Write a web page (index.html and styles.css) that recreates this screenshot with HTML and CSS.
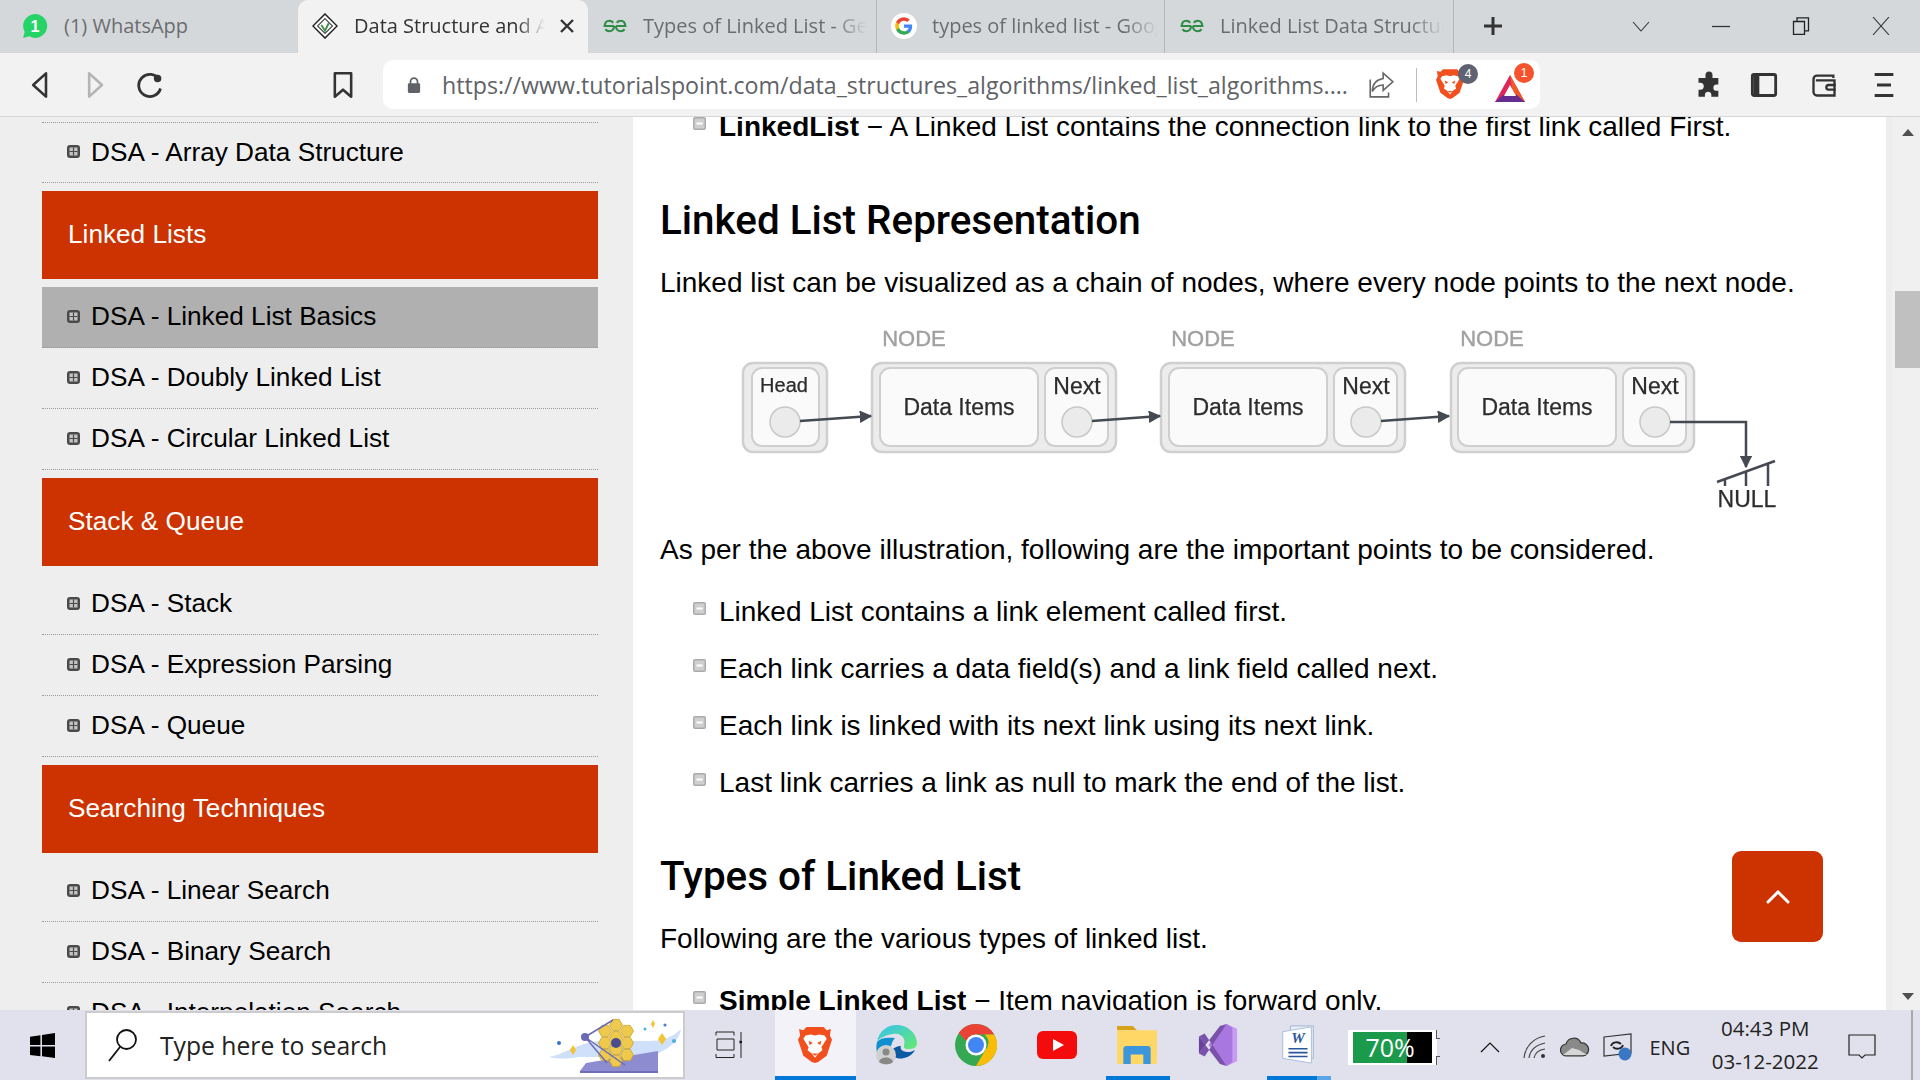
FILE: index.html
```html
<!DOCTYPE html>
<html lang="en">
<head>
<meta charset="utf-8">
<title>Data Structure and Algorithms - Linked List</title>
<link rel="stylesheet" href="styles.css">
</head>
<body>
<svg class="defs" width="0" height="0" aria-hidden="true">
  <defs>
    <symbol id="gfg" viewBox="0 0 32 18">
      <path d="M15 9H3.2C3.6 5 6 2.6 9 2.6c2 0 3.600.8 4.800 2.400M15 9c-.4 4-2.800 6.400-6 6.400-2 0-3.600-.8-4.800-2.400M17 9h11.800C28.400 5 26 2.600 23 2.600c-2 0-3.600.8-4.800 2.400M17 9c.4 4 2.800 6.400 6 6.400 2 0 3.600-.8 4.800-2.400" fill="none" stroke="#2f8d46" stroke-width="2.600"/>
    </symbol>
    <symbol id="brave" viewBox="0 0 32 36">
      <path d="M8 1h16l3 3 4-1-1 6 2 4-5 15-8 6-3 1-3-1-8-6L0 13l2-4-1-6 4 1z" fill="#f1501e"/>
      <path d="M7 9l5-1 4 1 4-1 5 1 2 3-5 8 1 3-4 3-3 4-3-4-4-3 1-3-5-8z" fill="#fff"/>
      <path d="M10 14l4 2-3 2zM22 14l-4 2 3 2zM13 26h6l-3 2z" fill="#f1501e"/>
    </symbol>
    <symbol id="sq" viewBox="0 0 13 13">
      <rect x="0" y="0" width="13" height="13" rx="3" fill="#4a4a4a"/>
      <rect x="2.500" y="2.500" width="8" height="8" fill="#c4c4c4"/>
      <path d="M6.500 2.500v8M2.500 6.500h8" stroke="#4a4a4a" stroke-width="1.200"/>
    </symbol>
    <symbol id="minus" viewBox="0 0 13 13">
      <rect x="0" y="0" width="13" height="13" rx="2" fill="#aaa"/>
      <rect x="1.500" y="1.500" width="10" height="10" fill="#cfcfcf"/>
      <path d="M3.500 6.500h6" stroke="#fff" stroke-width="2"/>
    </symbol>
    <polygon id="hex" points="6.500,0 3.250,5.600 -3.250,5.600 -6.500,0 -3.250,-5.600 3.250,-5.600"/>
  </defs>
</svg>

<header class="tabstrip">
  <div class="tab tab-wa">
    <svg class="fav" viewBox="0 0 24 24"><path d="M12 1a11 11 0 0 0-9.500 16.500L1 23l5.700-1.500A11 11 0 1 0 12 1z" fill="#25d366"/><text x="12" y="17.500" class="fav-num">1</text></svg>
    <span class="tab-name">(1) WhatsApp</span>
  </div>
  <div class="tab tab-active">
    <svg class="fav" viewBox="0 0 28 28"><path d="M14 1L27 14 14 27 1 14z" fill="#fff" stroke="#222" stroke-width="1.600"/><path d="M14 6L22 14 14 22 6 14z" fill="none" stroke="#444" stroke-width="1.200"/><path d="M10 13l4 6 4-8" fill="none" stroke="#3b8f4a" stroke-width="2"/></svg>
    <span class="tab-title t-active">Data Structure and Algorithms</span>
    <svg class="tab-x" viewBox="0 0 16 16"><path d="M2 2l12 12M14 2L2 14" stroke="#333" stroke-width="2.400"/></svg>
  </div>
  <div class="tab tab-gfg">
    <svg class="fav-g"><use href="#gfg"/></svg>
    <span class="tab-title t-gfg">Types of Linked List - GeeksforGeeks</span>
  </div>
  <div class="tab tab-goog tab-sep">
    <svg class="fav" viewBox="0 0 24 24"><circle cx="12" cy="12" r="12" fill="#fff"/><path d="M19.500 12.300c0-.6 0-1.100-.1-1.600H12v3h4.300a3.700 3.700 0 0 1-1.600 2.400v2h2.600c1.500-1.400 2.200-3.400 2.200-5.800z" fill="#4285f4"/><path d="M12 20c2.200 0 4-.7 5.300-1.900l-2.600-2c-.7.5-1.600.8-2.700.8-2.100 0-3.900-1.400-4.500-3.300H4.800v2.100A8 8 0 0 0 12 20z" fill="#34a853"/><path d="M7.500 13.600a4.800 4.800 0 0 1 0-3.200V8.300H4.800a8 8 0 0 0 0 7.400z" fill="#fbbc05"/><path d="M12 7.200c1.200 0 2.200.4 3 1.200l2.300-2.300A8 8 0 0 0 4.800 8.300l2.700 2.100c.6-1.900 2.400-3.200 4.500-3.200z" fill="#ea4335"/></svg>
    <span class="tab-title t-goog">types of linked list - Google Search</span>
  </div>
  <div class="tab tab-gfg tab-sep tab-last">
    <svg class="fav-g"><use href="#gfg"/></svg>
    <span class="tab-title t-last">Linked List Data Structure - GeeksforGeeks</span>
  </div>
  <svg class="plus" viewBox="0 0 20 20"><path d="M10 1v18M1 10h18" stroke="#333" stroke-width="3"/></svg>
  <div class="win-ctrls">
    <svg class="wc" viewBox="0 0 18 18"><path d="M1 5l8 9 8-9" fill="none" stroke="#333" stroke-width="1.100"/></svg>
    <svg class="wc" viewBox="0 0 18 18"><path d="M0 9.500h18" stroke="#333" stroke-width="1.300"/></svg>
    <svg class="wc" viewBox="0 0 18 18"><path d="M1.500 4.500h11v13h-11zM5 4.500V.8h11.500v13h-4" fill="none" stroke="#222" stroke-width="1.300"/></svg>
    <svg class="wc" viewBox="0 0 18 18"><path d="M1 0l16 18M17 0L1 18" stroke="#333" stroke-width="1.100"/></svg>
  </div>
</header>

<nav class="toolbar">
  <svg class="ti" viewBox="0 0 24 24"><path d="M18 2L7 12l11 10z" fill="none" stroke="#333" stroke-width="2.200" stroke-linejoin="round"/></svg>
  <svg class="ti ti-fwd" viewBox="0 0 24 24"><path d="M7 2l11 10L7 22z" fill="none" stroke="#b4b4b4" stroke-width="2.200" stroke-linejoin="round"/></svg>
  <svg class="ti ti-rel" viewBox="0 0 24 24"><path d="M20 7.500A9.500 9.500 0 1 0 21 15" fill="none" stroke="#333" stroke-width="2.400"/><circle cx="18.500" cy="6.500" r="3.200" fill="#333"/></svg>
  <svg class="ti ti-book" viewBox="0 0 24 24"><path d="M5 2h14v20l-7-6-7 6z" fill="none" stroke="#333" stroke-width="2.200" stroke-linejoin="round"/></svg>
  <div class="urlbar">
    <svg class="lock" viewBox="0 0 16 20"><path d="M4 9V6a4 4 0 0 1 8 0v3" fill="none" stroke="#5f6368" stroke-width="2"/><rect x="1" y="8" width="14" height="11" rx="1.500" fill="#5f6368"/></svg>
    <span class="url">https://www.tutorialspoint.com/data_structures_algorithms/linked_list_algorithms....</span>
    <svg class="share" viewBox="0 0 26 26"><path d="M15 2l9 8-9 8v-5c-5 0-8 2-10 6 0-7 4-11 10-12zM3 8v16h17v-4" fill="none" stroke="#666" stroke-width="1.500"/></svg>
    <span class="url-div"></span>
    <span class="ext-brave">
      <svg class="ext-brave-ic"><use href="#brave"/></svg>
      <span class="badge badge-gray">4</span>
    </span>
    <span class="ext-bat">
      <svg class="ext-bat-ic" viewBox="0 0 32 30"><path d="M16 2l15 27H1z" fill="#e0255a"/><path d="M16 2l15 27H20z" fill="#f15a24"/><path d="M1 29h30l-8-7H9z" fill="#662d91"/><path d="M16 12l6 11H10z" fill="#fff"/></svg>
      <span class="badge badge-red">1</span>
    </span>
  </div>
  <svg class="ti ti-puzzle" viewBox="0 0 24 24"><path d="M9 3.500a3 3 0 0 1 6 0V6h5v5.500h-2a2.800 2.800 0 0 0 0 5.500h2v5h-6v-2a2.800 2.800 0 0 0-5.500 0v2H3v-6h1.500a3 3 0 0 0 0-6H3V6h6z" fill="#333"/></svg>
  <svg class="ti ti-side" viewBox="0 0 24 24"><rect x="2" y="3" width="20" height="18" rx="1.500" fill="none" stroke="#333" stroke-width="2.400"/><path d="M3 3h5v18H3z" fill="#333"/></svg>
  <svg class="ti ti-wal" viewBox="0 0 24 24"><path d="M20 6V4H6a3 3 0 0 0-3 3v11a3 3 0 0 0 3 3h15V8H5" fill="none" stroke="#333" stroke-width="2"/><path d="M22 12h-6a2 2 0 0 0 0 4h6" fill="none" stroke="#333" stroke-width="2"/></svg>
  <svg class="ti ti-menu" viewBox="0 0 24 24"><path d="M4 3h16M6 12h12M4 21h16" stroke="#333" stroke-width="2.400"/></svg>
</nav>

<div class="viewport">
  <aside class="sidebar">
    <ul class="side-list">
      <li class="side-item"><svg class="sq"><use href="#sq"/></svg>DSA - Array Data Structure</li>
      <li class="side-head">Linked Lists</li>
      <li class="side-item side-active"><svg class="sq"><use href="#sq"/></svg>DSA - Linked List Basics</li>
      <li class="side-item"><svg class="sq"><use href="#sq"/></svg>DSA - Doubly Linked List</li>
      <li class="side-item"><svg class="sq"><use href="#sq"/></svg>DSA - Circular Linked List</li>
      <li class="side-head">Stack &amp; Queue</li>
      <li class="side-item"><svg class="sq"><use href="#sq"/></svg>DSA - Stack</li>
      <li class="side-item"><svg class="sq"><use href="#sq"/></svg>DSA - Expression Parsing</li>
      <li class="side-item"><svg class="sq"><use href="#sq"/></svg>DSA - Queue</li>
      <li class="side-head">Searching Techniques</li>
      <li class="side-item"><svg class="sq"><use href="#sq"/></svg>DSA - Linear Search</li>
      <li class="side-item"><svg class="sq"><use href="#sq"/></svg>DSA - Binary Search</li>
      <li class="side-item"><svg class="sq"><use href="#sq"/></svg>DSA - Interpolation Search</li>
    </ul>
  </aside>
  <main class="main">
    <div class="article">
      <ul class="points points-top">
        <li><svg class="minus"><use href="#minus"/></svg><span><b>LinkedList</b> − A Linked List contains the connection link to the first link called First.</span></li>
      </ul>
      <h2 class="h-first">Linked List Representation</h2>
      <p class="p-first">Linked list can be visualized as a chain of nodes, where every node points to the next node.</p>
      <svg class="diagram" viewBox="730 320 1060 200">
        <defs>
          <marker id="ah" markerWidth="5" markerHeight="5" refX="4.500" refY="2.500" orient="auto"><path d="M0 0l5 2.500L0 5z" fill="#454a52"/></marker>
        </defs>
        <g class="d-outer">
          <rect x="743" y="362" width="84" height="89" rx="10"/>
          <rect x="872" y="362" width="244" height="89" rx="10"/>
          <rect x="1161" y="362" width="244" height="89" rx="10"/>
          <rect x="1451" y="362" width="243" height="89" rx="10"/>
        </g>
        <g class="d-inner">
          <rect x="752" y="367" width="67" height="78" rx="10"/>
          <rect x="880" y="367" width="158" height="78" rx="10"/>
          <rect x="1045" y="367" width="63" height="78" rx="10"/>
          <rect x="1169" y="367" width="158" height="78" rx="10"/>
          <rect x="1334" y="367" width="63" height="78" rx="10"/>
          <rect x="1458" y="367" width="158" height="78" rx="10"/>
          <rect x="1623" y="367" width="63" height="78" rx="10"/>
        </g>
        <g class="d-circle">
          <circle cx="785" cy="421" r="15"/>
          <circle cx="1077" cy="421" r="15"/>
          <circle cx="1366" cy="421" r="15"/>
          <circle cx="1655" cy="421" r="15"/>
        </g>
        <g class="d-arrow">
          <path d="M800 420l71-5" marker-end="url(#ah)"/>
          <path d="M1092 420l68-5" marker-end="url(#ah)"/>
          <path d="M1381 420l68-5" marker-end="url(#ah)"/>
          <path d="M1670 421h76v45" marker-end="url(#ah)"/>
          <path d="M1717 481l58-21M1725 478v7M1746 470v15M1768 462v23"/>
        </g>
        <g class="d-node">
          <text x="914" y="345">NODE</text>
          <text x="1203" y="345">NODE</text>
          <text x="1492" y="345">NODE</text>
        </g>
        <g class="d-label">
          <text x="784" y="391" class="d-head">Head</text>
          <text x="959" y="414">Data Items</text>
          <text x="1248" y="414">Data Items</text>
          <text x="1537" y="414">Data Items</text>
          <text x="1077" y="393">Next</text>
          <text x="1366" y="393">Next</text>
          <text x="1655" y="393">Next</text>
          <text x="1747" y="506">NULL</text>
        </g>
      </svg>
      <p class="p-after">As per the above illustration, following are the important points to be considered.</p>
      <ul class="points points-mid">
        <li><svg class="minus"><use href="#minus"/></svg><span>Linked List contains a link element called first.</span></li>
        <li><svg class="minus"><use href="#minus"/></svg><span>Each link carries a data field(s) and a link field called next.</span></li>
        <li><svg class="minus"><use href="#minus"/></svg><span>Each link is linked with its next link using its next link.</span></li>
        <li><svg class="minus"><use href="#minus"/></svg><span>Last link carries a link as null to mark the end of the list.</span></li>
      </ul>
      <h2 class="h-second">Types of Linked List</h2>
      <p class="p-second">Following are the various types of linked list.</p>
      <ul class="points points-end">
        <li><svg class="minus"><use href="#minus"/></svg><span><b>Simple Linked List</b> − Item navigation is forward only.</span></li>
      </ul>
    </div>
    <button class="to-top" aria-label="Back to top"><svg class="to-top-ic" viewBox="0 0 24 14"><path d="M2 12L12 2l10 10" fill="none" stroke="#fff" stroke-width="3" stroke-linecap="round"/></svg></button>
  </main>
  <div class="scrollbar">
    <span class="arr-up"></span>
    <span class="thumb"></span>
    <span class="arr-down"></span>
  </div>
</div>

<footer class="taskbar">
  <div class="tb-start">
    <svg class="win" viewBox="0 0 24 24"><path d="M0 3.500l10-1.400V11.500H0zM11.500 1.900L24 0v11.500H11.500zM0 13h10v9.400L0 21zM11.500 13H24v11l-12.500-1.800z" fill="#000"/></svg>
  </div>
  <div class="tb-search">
    <svg class="mag" viewBox="0 0 30 34"><circle cx="18.500" cy="11.500" r="9.500" fill="none" stroke="#111" stroke-width="1.800"/><path d="M12 19L1 33" stroke="#111" stroke-width="1.800"/></svg>
    <span class="search-text">Type here to search</span>
    <svg class="jwst" viewBox="0 0 132 56">
      <path d="M0 40C14 38 28 26 50 24h50c14 0 24-4 32-12-2 14-18 26-40 28H30C18 42 8 42 0 40z" fill="#cfe0fa"/>
      <path d="M31 54l6-8 72-12v20z" fill="#8e8cd0"/>
      <path d="M31 54h78v2H31z" fill="#6f6db8"/>
      <g class="j-hex">
        <use href="#hex" x="56" y="14"/><use href="#hex" x="56" y="26"/><use href="#hex" x="56" y="38"/>
        <use href="#hex" x="67" y="8"/><use href="#hex" x="67" y="20"/><use href="#hex" x="67" y="32"/><use href="#hex" x="67" y="44"/>
        <use href="#hex" x="78" y="14"/><use href="#hex" x="78" y="26"/><use href="#hex" x="78" y="38"/>
      </g>
      <circle cx="67" cy="26" r="5" fill="#4b4b8f"/>
      <path d="M36 20L64 3M36 20l40 28M36 20l22 26" stroke="#6a6ab5" stroke-width="1.500" fill="none"/>
      <circle cx="36" cy="20" r="4" fill="#6a6ab5"/>
      <path d="M113 16l4 6-4 6-4-6zM104 3l2 4-2 4-2-4zM24 28l3 5-3 5-3-5z" fill="#f4c430"/>
      <circle cx="116" cy="8" r="1.600" fill="#4b7fd6"/><circle cx="125" cy="24" r="2" fill="#4ab0e0"/><circle cx="10" cy="26" r="2" fill="#3a6fd0"/><circle cx="96" cy="12" r="1.500" fill="#4ab0e0"/>
    </svg>
  </div>
  <div class="tb-cell tb-taskview">
    <svg class="tb-tv" viewBox="0 0 28 28"><path d="M2 1h18M2 4.500V1M20 4.500V1M3 8h17v11H3zM2 26.500h18M2 23v3.500M20 23v3.500M27 1v8M27 13v14" fill="none" stroke="#222" stroke-width="1"/><rect x="25.500" y="9.500" width="3" height="3" fill="#111"/></svg>
  </div>
  <div class="tb-cell tb-on"><svg class="tb-ic-brave"><use href="#brave"/></svg></div>
  <div class="tb-cell">
    <svg class="tb-ic" viewBox="0 0 42 42"><defs><linearGradient id="e1" x1="0" y1="0" x2="1" y2="1"><stop offset="0" stop-color="#35c1f1"/><stop offset="1" stop-color="#66eb6e"/></linearGradient></defs><path d="M2 18C4 7 12 1 22 1c11 0 20 9 20 18 0 3-2 6-7 6-3 0-6 0-6-2 0-3 1-4 0-8-2-4-6-6-11-5C11 11 4 14 2 18z" fill="url(#e1)"/><path d="M2 18c-2 9 1 17 6 20 1-4 3-8 7-11 1-6 2-10 5-13-9-1-15 0-18 4z" fill="#0f8fcf"/><path d="M15 27c2 6 8 9 14 7 5-1 9-4 11-8-3 2-8 3-12 1-2-1-3-3-2-5-4 0-8 2-11 5z" fill="#0c59a4"/><circle cx="11" cy="31" r="10" fill="#d0d0d0"/><circle cx="11" cy="28" r="3.500" fill="#888"/><path d="M4 38c1-6 13-6 14 0-3 3-10 3-14 0z" fill="#888"/></svg>
  </div>
  <div class="tb-cell">
    <svg class="tb-ic" viewBox="0 0 42 42"><circle cx="21" cy="21" r="21" fill="#34a853"/><path d="M21 0a21 21 0 0 1 18.200 10.500H21a10.500 10.500 0 0 0-9.800 6.600L3.700 9A21 21 0 0 1 21 0z" fill="#ea4335"/><path d="M39.200 10.500A21 21 0 0 1 21 42l9.500-16a10.500 10.500 0 0 0-1-15.500z" fill="#fbbc05"/><circle cx="21" cy="21" r="10.500" fill="#fff"/><circle cx="21" cy="21" r="8" fill="#4285f4"/></svg>
  </div>
  <div class="tb-cell">
    <svg class="tb-yt" viewBox="0 0 40 28"><rect width="40" height="28" rx="6" fill="#f40c0c"/><path d="M16 8l11 6-11 6z" fill="#fff"/></svg>
  </div>
  <div class="tb-cell tb-run">
    <svg class="tb-ic" viewBox="0 0 38 40"><path d="M0 2h15l4 4H0z" fill="#d9a21b"/><rect x="0" y="6" width="38" height="32" rx="1" fill="#ffd767"/><path d="M6 38V24a3 3 0 0 1 3-3h20a3 3 0 0 1 3 3v14h-7v-9H13v9z" fill="#3c96dc"/></svg>
  </div>
  <div class="tb-cell">
    <svg class="tb-ic" viewBox="0 0 40 44"><path d="M29 0l11 5v34l-11 5V0z" fill="#c99bf2"/><path d="M29 0L10 22l19 22 6-4V4z" fill="#a877e0"/><path d="M0 13l6-3 23 34-7-2zM0 31l6 3L29 0l-7 2z" fill="#7b52ab"/><path d="M0 13v18l7-9z" fill="#68429a"/></svg>
  </div>
  <div class="tb-cell tb-run-split">
    <svg class="tb-ic" viewBox="0 0 40 44"><path d="M12 2h24v34H12z" fill="#e8eef8" stroke="#9fb3d2"/><path d="M4 8l30-5v38L4 36z" fill="#fff" stroke="#a8bcd8"/><path d="M10 26h20M10 30h20M10 34h20" stroke="#2b579a" stroke-width="1.600"/><text x="20" y="20" class="word-w">W</text></svg>
  </div>
  <div class="battery"><span class="bat-fill">70%</span><span class="bat-rest"></span></div>
  <div class="tray">
    <svg class="tr-chev" viewBox="0 0 20 12"><path d="M1 11l9-9 9 9" fill="none" stroke="#111" stroke-width="1.200"/></svg>
    <svg class="tr-wifi" viewBox="0 0 24 24"><path d="M1 23C2 12 10 3 22 1M6 23c1-8 7-13 16-15M11 23c.8-4 4-8 11-9" fill="none" stroke="#444" stroke-width="1.200"/><circle cx="20" cy="21" r="2" fill="#333"/></svg>
    <svg class="tr-cloud" viewBox="0 0 30 20"><path d="M7 19a6 6 0 0 1-1-12 8 8 0 0 1 15-1 6.500 6.500 0 0 1 2 13z" fill="#8a8a8a" stroke="#333" stroke-width="1.200"/><path d="M3 18l9-7 7 2 8 5z" fill="#d6d6d6"/></svg>
    <svg class="tr-sync" viewBox="0 0 30 28"><path d="M1 4l27-3v19l-27 3z" fill="none" stroke="#333" stroke-width="1.200"/><path d="M8 13c1-4 7-5 10-2M20 12c-1 4-7 5-10 2" fill="none" stroke="#222" stroke-width="1.800"/><circle cx="22" cy="21" r="6.500" fill="#3a78c4"/></svg>
    <span class="eng">ENG</span>
    <div class="clock"><span>04:43 PM</span><span>03-12-2022</span></div>
    <svg class="tr-note" viewBox="0 0 28 28"><path d="M1 2h26v20H17l-3 3-3-3H1z" fill="none" stroke="#222" stroke-width="1.200"/></svg>
  </div>
</footer>
</body>
</html>
```

FILE: styles.css
```css
* { box-sizing: border-box; }
html, body { margin: 0; padding: 0; }
body {
  width: 1920px;
  height: 1080px;
  overflow: hidden;
  display: flex;
  flex-direction: column;
  font-family: "Liberation Sans", Arial, sans-serif;
  background: #fff;
  color: #000;
}
.defs { position: absolute; }
ul { list-style: none; margin: 0; padding: 0; }

/* tab strip */
.tabstrip {
  height: 53px;
  flex: none;
  display: flex;
  align-items: stretch;
  background: #d5d8db;
  font-family: "Open Sans", sans-serif;
  font-size: 20px;
  color: #6a6d70;
}
.tab {
  width: 288px;
  flex: none;
  display: flex;
  align-items: center;
  padding: 0 0 2px 16px;
  gap: 16px;
  position: relative;
}
.tab-wa { width: 298px; padding-left: 22px; gap: 16px; }
.tab-active {
  width: 290px;
  padding-left: 14px;
  background: #f2f2f2;
  border-radius: 10px 10px 0 0;
  color: #333;
}
.tab-sep { border-left: 1px solid #b4b7ba; }
.tab-last { width: 290px; border-right: 1px solid #b4b7ba; }
.tab-name { white-space: nowrap; line-height: 30px; }
.tab-title {
  white-space: nowrap;
  overflow: hidden;
  -webkit-mask-image: linear-gradient(90deg, #000 85%, transparent);
  mask-image: linear-gradient(90deg, #000 85%, transparent);
  line-height: 30px;
}
.t-active { width: 191px; }
.t-gfg { width: 224px; }
.t-goog { width: 226px; }
.t-last { width: 224px; }
.fav { width: 26px; height: 26px; flex: none; }
.fav-num { font: bold 15px "Liberation Sans", sans-serif; fill: #fff; text-anchor: middle; }
.fav-g { width: 26px; height: 16px; flex: none; }
.tab-x { width: 16px; height: 16px; flex: none; margin-left: -2px; }
.tab-gfg { gap: 15px; padding-left: 14px; }
.tab-goog { padding-left: 14px; gap: 15px; }
.plus { width: 20px; height: 20px; flex: none; align-self: center; margin: 0 0 2px 29px; }
.win-ctrls {
  margin-left: auto;
  display: flex;
  align-items: center;
  padding: 0 30px 2px 0;
  gap: 62px;
}
.wc { width: 18px; height: 18px; flex: none; display: block; }

/* toolbar */
.toolbar {
  height: 63px;
  flex: none;
  display: flex;
  align-items: center;
  padding: 7px 0 7px 23px;
  background: #f2f2f2;
  box-shadow: 0 1px 0 #d4d7da;
  position: relative;
  z-index: 1;
}
.ti { width: 32px; height: 28px; flex: none; }
.ti-fwd { margin-left: 24px; }
.ti-rel { margin-left: 23px; }
.ti-book { margin-left: 161px; }
.ti-puzzle { margin-left: 153px; }
.ti-side { margin-left: 23px; }
.ti-wal { margin-left: 28px; }
.ti-menu { margin-left: 28px; }
.urlbar {
  width: 1157px;
  height: 49px;
  margin-left: 24px;
  background: #fff;
  border-radius: 10px;
  flex: none;
  display: flex;
  align-items: center;
  padding-left: 24px;
}
.lock { width: 14px; height: 18px; flex: none; }
.url {
  margin-left: 21px;
  width: 899px;
  flex: none;
  white-space: nowrap;
  font-family: "Open Sans", sans-serif;
  font-size: 23.200px;
  color: #5f6368;
}
.share { width: 28px; height: 28px; flex: none; margin-left: 26px; }
.url-div { width: 1px; height: 34px; background: #bcbcbc; margin-left: 21px; flex: none; }
.ext-brave { position: relative; width: 32px; height: 36px; margin-left: 19px; flex: none; }
.ext-brave-ic { width: 28px; height: 34px; display: block; }
.ext-bat { position: relative; width: 36px; height: 32px; margin-left: 26px; flex: none; }
.ext-bat-ic { width: 32px; height: 30px; display: block; margin-top: 4px; }
.badge {
  position: absolute;
  width: 20px;
  height: 20px;
  border-radius: 50%;
  color: #fff;
  font-size: 12px;
  line-height: 20px;
  text-align: center;
}
.badge-gray { background: #5f6270; top: -3px; right: -10px; }
.badge-red { background: #f5532d; top: -6px; right: -4px; }

/* viewport */
.viewport { flex: 1; min-height: 0; display: flex; overflow: hidden; }
.sidebar {
  width: 633px;
  flex: none;
  background: #eee;
  padding: 6px 35px 0 42px;
  overflow: hidden;
  font-size: 26.200px;
}
.side-list { display: flex; flex-direction: column; }
.side-item {
  height: 61px;
  flex: none;
  display: flex;
  align-items: center;
  border-bottom: 1px dotted #999;
  padding: 0 0 1px 25px;
  gap: 11px;
  white-space: nowrap;
}
.side-list > .side-item:first-child { border-top: 1px dotted #999; }
.side-active { background: #b0b0b0; }
.side-head {
  height: 88px;
  flex: none;
  margin: 8px 0;
  background: #c30;
  color: #fff;
  display: flex;
  align-items: center;
  padding: 0 0 2px 26px;
}
.sq { width: 13px; height: 13px; flex: none; margin-top: -1px; }

/* main */
.main { flex: 1; position: relative; overflow: hidden; padding-left: 27px; }
.article { margin-top: -18px; font-size: 28px; }
.points li {
  height: 57px;
  display: flex;
  align-items: center;
  padding-left: 33px;
  gap: 13px;
  white-space: nowrap;
}
.minus { width: 13px; height: 13px; flex: none; margin-top: -7px; }
h2 {
  margin: 0;
  height: 48px;
  line-height: 48px;
  font-family: Roboto, sans-serif;
  font-weight: 500;
  font-size: 40.400px;
  color: #000;
}
p { margin: 0; height: 40px; line-height: 40px; white-space: nowrap; }
.h-first { margin-top: 42px; }
.p-first { margin-top: 18px; }
.diagram { display: block; width: 1060px; height: 200px; margin: 18px 0 0 70px; filter: blur(.4px); }
.p-after { margin-top: 9px; }
.points-mid { margin-top: 13px; }
.h-second { margin-top: 42px; }
.p-second { margin-top: 18px; }
.points-end { margin-top: 13px; }

.d-outer rect { fill: #ececec; stroke: #cfcfcf; stroke-width: 2.500; }
.d-inner rect { fill: #fafafa; stroke: #cfcfcf; stroke-width: 2; }
.d-circle circle { fill: #ebebeb; stroke: #c8c8c8; stroke-width: 1.500; }
.d-arrow path { fill: none; stroke: #454a52; stroke-width: 2.500; }
.d-node text { font-size: 22px; fill: #a0a0a0; stroke: #a0a0a0; stroke-width: .4; text-anchor: middle; }
.d-label text { font-size: 23px; fill: #2c2c2c; stroke: #2c2c2c; stroke-width: .25; text-anchor: middle; }
.d-label .d-head { font-size: 20px; }

.to-top {
  position: absolute;
  left: 1099px;
  top: 735px;
  width: 91px;
  height: 91px;
  border: 0;
  padding: 0;
  border-radius: 9px;
  background: #c30;
  display: flex;
  align-items: center;
  justify-content: center;
}
.to-top-ic { width: 24px; height: 14px; }

/* scrollbar */
.scrollbar {
  width: 34px;
  flex: none;
  background: #f0f0f0;
  border-left: 6px solid #ededed;
  display: flex;
  flex-direction: column;
  align-items: flex-end;
}
.arr-up, .arr-down {
  width: 0;
  height: 0;
  border-left: 6.500px solid transparent;
  border-right: 6.500px solid transparent;
  margin-right: 6px;
}
.arr-up { border-bottom: 7px solid #505050; margin-top: 13px; }
.arr-down { border-top: 7px solid #505050; margin-top: auto; margin-bottom: 10px; }
.thumb { width: 25px; height: 77px; background: #c0c0c0; margin-top: 155px; }

/* taskbar */
.taskbar {
  height: 70px;
  flex: none;
  display: flex;
  align-items: stretch;
  background: #e1e1ee;
}
.tb-start { width: 85px; flex: none; display: flex; align-items: center; padding-left: 30px; }
.win { width: 25px; height: 25px; }
.tb-search {
  width: 600px;
  flex: none;
  margin-top: 1px;
  margin-bottom: 1px;
  background: #fff;
  border: 2px solid #ccc;
  display: flex;
  align-items: center;
  padding-left: 20px;
  font-family: "Open Sans", sans-serif;
  font-size: 24.700px;
  color: #222;
}
.mag { width: 32px; height: 34px; flex: none; }
.search-text { margin-left: 21px; white-space: nowrap; }
.jwst { width: 132px; height: 56px; margin-left: auto; margin-right: 2px; flex: none; }
.j-hex { fill: #efc94c; stroke: #c9a22c; stroke-width: .8; }
.tb-cell {
  width: 80.500px;
  flex: none;
  display: flex;
  align-items: center;
  justify-content: center;
  border-bottom: 4px solid transparent;
  padding-top: 4px;
  position: relative;
}
.tb-taskview { width: 90px; justify-content: flex-start; padding-left: 29px; }
.tb-tv { width: 28px; height: 28px; }
.tb-on { background: #f2f2f8; border-bottom-color: #0078d7; }
.tb-run::after, .tb-run-split::after {
  content: "";
  position: absolute;
  bottom: -4px;
  height: 4px;
  background: #0078d7;
}
.tb-run::after { left: 9px; width: 64px; }
.tb-run-split::after {
  left: 9px;
  width: 64px;
  background: linear-gradient(90deg, #0078d7 78%, #5aa5e6 78%);
}
.tb-ic { width: 42px; height: 42px; }
.tb-ic-brave { width: 34px; height: 42px; }
.tb-yt { width: 40px; height: 28px; }
.word-w { font: italic bold 16px "Liberation Serif", serif; fill: #2b579a; text-anchor: middle; }
.battery {
  width: 89px;
  height: 35px;
  flex: none;
  align-self: center;
  margin: 4px 0 0 9px;
  background: #fff;
  padding: 2px 5px;
  display: flex;
  position: relative;
}
.battery::before, .battery::after {
  content: "";
  position: absolute;
  right: -3px;
  width: 3px;
  height: 8px;
  border-left: 1px solid #555;
}
.battery::before { top: 0; border-bottom: 1px solid #555; }
.battery::after { bottom: 0; border-top: 1px solid #555; }
.bat-fill {
  width: 54px;
  flex: none;
  background: #1b9a4b;
  color: #fff;
  font-family: "Open Sans", sans-serif;
  font-size: 25px;
  line-height: 31px;
  white-space: nowrap;
  padding-left: 13px;
  position: relative;
  z-index: 1;
}
.bat-rest { flex: 1; background: #000; }
.tray { flex: 1; display: flex; align-items: center; position: relative; border-right: 2px solid #aaa; margin-right: 7px; font-family: "Open Sans", sans-serif; color: #222; padding-top: 4px; }
.tr-chev { width: 20px; height: 12px; margin-left: 43px; flex: none; }
.tr-wifi { width: 24px; height: 24px; margin-left: 23px; flex: none; }
.tr-cloud { width: 30px; height: 20px; margin-left: 13px; flex: none; }
.tr-sync { width: 30px; height: 28px; margin-left: 13px; flex: none; }
.eng { font-size: 20px; margin-left: 17px; }
.clock { display: flex; flex-direction: column; align-items: center; font-size: 20.500px; line-height: 33px; width: 130px; margin-left: 10px; margin-top: -4px; white-space: nowrap; }
.tr-note { width: 28px; height: 28px; margin-left: 18px; flex: none; }
```
